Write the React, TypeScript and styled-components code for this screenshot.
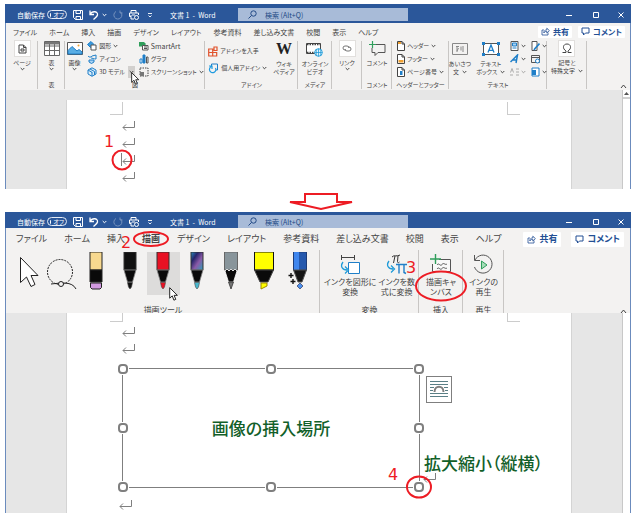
import React from "react";
import styled, { createGlobalStyle, css } from "styled-components";

const RED = "#ed1c24";
const BLUE = "#2b579a";
const GREEN = "#126029";

const GlobalStyle = createGlobalStyle`
  * { box-sizing: border-box; }
  body {
    margin: 0;
    background: #fff;
    color: #444;
    font-family: "Noto Sans CJK JP", sans-serif;
    font-feature-settings: "palt";
  }
  button, input { font: inherit; font-feature-settings: inherit; color: inherit; }
  button { border: 0; padding: 0; background: none; }
  svg { display: block; flex: none; }
`;

const Page = styled.main`
  padding: 4px 8px 16px 5px;
`;

/* ---------- window and title bar ---------- */

const AppWindow = styled.section`
  display: flex;
  flex-direction: column;
`;

const TitleBar = styled.header<{ $short?: boolean }>`
  display: grid;
  grid-template-columns: 153px 68px minmax(60px, 170px) 1fr;
  align-items: center;
  height: ${(p) => (p.$short ? 16 : 19)}px;
  padding: ${(p) => (p.$short ? 3 : 2)}px 0 0 12px;
  background: ${BLUE};
  color: #fff;
  font-size: 7px;
  line-height: 10px;
`;

const QuickAccess = styled.div`
  display: flex;
  align-items: center;
`;

const AutoSave = styled.label`
  display: flex;
  align-items: center;
  gap: 2px;
  margin-right: 6px;
  white-space: nowrap;
`;

const Pill = styled.span`
  display: flex;
  align-items: center;
  gap: 2px;
  width: 20px;
  height: 9px;
  padding: 0 2px;
  border: 1px solid #e4ebf5;
  border-radius: 5px;
  font-size: 6px;
`;

const PillInput = styled.input`
  appearance: none;
  width: 4px;
  height: 4px;
  margin: 0;
  border-radius: 50%;
  background: #fff;
`;

const BarButton = styled.button<{ $dim?: boolean; $gap?: number }>`
  display: flex;
  margin-right: ${(p) => p.$gap ?? 6}px;
  opacity: ${(p) => (p.$dim ? 0.35 : 1)};
`;

const DocTitle = styled.span`
  white-space: nowrap;
`;

const SearchBox = styled.label`
  display: flex;
  align-items: center;
  gap: 8px;
  height: 13px;
  padding-left: 10px;
  background: #a8bbd8;
  color: #234a86;
`;

const SearchInput = styled.input`
  flex: 1;
  min-width: 0;
  height: 12px;
  border: 0;
  padding: 0;
  background: none;
  outline: 0;
  &::placeholder { color: #234a86; opacity: 1; }
`;

const Controls = styled.div`
  display: flex;
  justify-content: flex-end;
  gap: 17px;
  padding-right: 7px;
`;

/* ---------- tabs ---------- */

const TabRow = styled.nav<{ $large?: boolean }>`
  display: flex;
  align-items: center;
  gap: ${(p) => (p.$large ? 17 : 12)}px;
  height: ${(p) => (p.$large ? 22 : 17)}px;
  padding: ${(p) => (p.$large ? "0 6px 0 10px" : "0 5px 0 7px")};
  border: solid #6b8bbd;
  border-width: 0 1px;
  background: #f3f2f1;
  font-size: ${(p) => (p.$large ? 9 : 7)}px;
  line-height: 12px;
`;

const Tab = styled.button<{ $active?: boolean }>`
  position: relative;
  white-space: nowrap;
  font-weight: ${(p) => (p.$active ? 700 : 400)};
`;

const TabActions = styled.div<{ $large?: boolean }>`
  display: flex;
  gap: ${(p) => (p.$large ? 10 : 6)}px;
  margin-left: auto;
  font-size: ${(p) => (p.$large ? 9 : 8)}px;
`;

const ActionButton = styled.button<{ $large?: boolean }>`
  display: flex;
  align-items: center;
  gap: 3px;
  height: ${(p) => (p.$large ? 15 : 12)}px;
  padding: 0 ${(p) => (p.$large ? 4 : 3)}px;
  border-radius: 1px;
  background: #fff;
  color: #234f94;
  font-weight: 700;
  white-space: nowrap;
`;

/* ---------- ribbon ---------- */

const ribbonBase = css`
  display: grid;
  border: solid #6b8bbd;
  border-width: 0 1px;
  background: #f3f2f1;
`;

const InsertRibbon = styled.div`
  ${ribbonBase}
  grid-template-columns: 32px 27px 140px 93px 34px 30px 30px 57px 98px 40px 1fr;
  height: 50px;
  font-size: 6px;
  line-height: 8px;
`;

const DrawRibbon = styled.div`
  ${ribbonBase}
  grid-template-columns: 314px 99px 44px 41px 1fr;
  height: 63px;
  overflow: hidden;
  font-size: 8px;
  line-height: 10px;
`;

const Group = styled.section<{ $large?: boolean }>`
  display: flex;
  flex-direction: column;
  min-width: 0;
  padding-top: ${(p) => (p.$large ? 2 : 0)}px;
  background: linear-gradient(#c8c6c4, #c8c6c4) right / 1px ${(p) => (p.$large ? "100%" : "48px")} no-repeat;
`;

const GroupBody = styled.div<{ $large?: boolean; $gap?: number }>`
  display: flex;
  justify-content: center;
  gap: ${(p) => p.$gap ?? 0}px;
  height: ${(p) => (p.$large ? 53 : 41)}px;
`;

const GroupLabel = styled.h2`
  margin: 0;
  font: inherit;
  text-align: center;
  white-space: nowrap;
`;

const BigButton = styled.button`
  position: relative;
  display: flex;
  flex-direction: column;
  align-items: center;
  justify-content: flex-start;
  white-space: nowrap;
  span { display: flex; align-items: center; gap: 3px; }
`;

const IconSlot = styled.i<{ $h: number; $boxed?: boolean }>`
  display: flex;
  align-items: center;
  justify-content: center;
  min-width: 17px;
  height: ${(p) => p.$h}px;
  margin-bottom: ${(p) => (p.$h > 20 ? 1 : 2)}px;
  background: ${(p) => (p.$boxed ? "#fff" : "none")};
  outline: ${(p) => (p.$boxed ? "1px solid #e1dfdd" : "none")};
  outline-offset: -1px;
`;

const SmallColumn = styled.div<{ $two?: boolean }>`
  display: flex;
  flex-direction: column;
  gap: ${(p) => (p.$two ? 5 : 1)}px;
  padding-top: ${(p) => (p.$two ? 5 : 0)}px;
`;

const SmallButton = styled.button<{ $dim?: boolean; $latin?: boolean }>`
  display: flex;
  align-items: center;
  gap: 2px;
  height: 12px;
  font-size: ${(p) => (p.$latin ? 7 : 6)}px;
  white-space: nowrap;
  opacity: ${(p) => (p.$dim ? 0.45 : 1)};
`;

const SplitArrow = styled.span`
  position: relative;
  display: flex;
  align-items: center;
  justify-content: center;
  width: 7px;
  height: 12px;
  margin-left: 1px;
  background: #d2d0ce;
`;

const Pointer = styled.span<{ $low?: boolean }>`
  position: absolute;
  left: 50%;
  top: 50%;
  z-index: 2;
  padding: ${(p) => (p.$low ? "13px 0 0 6px" : 0)};
`;

const Collapse = styled.button`
  justify-self: end;
  align-self: end;
  padding: 0 3px 1px 0;
`;

const WikiMark = styled.span`
  font: 700 16px "Liberation Serif", serif;
  color: #222;
`;

const Tools = styled.div`
  display: grid;
  grid-template-columns: repeat(9, 1fr);
  height: 53px;
  padding: 0 5px 0 6px;
`;

const Tool = styled.button<{ $active?: boolean }>`
  position: relative;
  display: flex;
  justify-content: center;
  align-items: flex-start;
  height: 43px;
  background: ${(p) => (p.$active ? "#dddcdb" : "none")};
`;

/* ---------- document area ---------- */

const Workspace = styled.div`
  display: grid;
  grid-template-columns: 61px 1fr 51px 8px;
  border: solid #6b8bbd;
  border-width: 0 1px;
  background: #e6e6e6;
`;

const Sheet = styled.div<{ $top?: boolean }>`
  grid-column: 2;
  margin-top: ${(p) => (p.$top ? 10 : 0)}px;
  padding: ${(p) => (p.$top ? "2px 51px 0 43px" : "0 51px 0 43px")};
  background: #fff;
  box-shadow: -1px 0 #d4d4d4, 1px 0 #d4d4d4;
`;

const CropMarks = styled.div<{ $short?: boolean }>`
  display: flex;
  justify-content: space-between;
  height: ${(p) => (p.$short ? 9 : 13)}px;
`;

const Crop = styled.span<{ $side: "left" | "right" }>`
  width: 13px;
  border-bottom: 1px solid #ccc;
  border-${(p) => (p.$side === "left" ? "right" : "left")}: 1px solid #ccc;
`;

const Lines = styled.div<{ $first?: boolean }>`
  display: grid;
  grid-auto-rows: 17px;
  padding: ${(p) => (p.$first ? "2px 0 4px 12px" : "1px 0 11px 12px")};
`;

const Line = styled.div`
  position: relative;
  display: flex;
  align-items: center;
`;

const Scrollbar = styled.div`
  grid-column: 4;
  background: #fff;
  border-left: 1px solid #c8c8c8;
`;

const ScrollUp = styled.button`
  display: flex;
  align-items: center;
  justify-content: center;
  width: 100%;
  height: 9px;
  border-bottom: 2px solid #d0d0d0;
`;

const Between = styled.div`
  display: flex;
  justify-content: center;
  padding: 4px 0 2px 5px;
`;

const DrawingCanvas = styled.div`
  position: relative;
  display: flex;
  align-items: center;
  justify-content: center;
  height: 120px;
  margin: 0 100px 0 12px;
  border: 1px solid #7f7f7f;
`;

const Caption = styled.p`
  margin: 0;
  color: ${GREEN};
  font-size: 17px;
  line-height: 20px;
  font-weight: 500;
  white-space: nowrap;
`;

const ScaleCaption = styled(Caption)`
  position: absolute;
  left: calc(100% + 5px);
  bottom: 14px;
`;

const Handle = styled.span<{ $x: number; $y: number }>`
  position: absolute;
  left: ${(p) => p.$x}%;
  top: ${(p) => p.$y}%;
  width: 10px;
  height: 10px;
  margin: -5px;
  border: 2px solid #7f7f7f;
  border-radius: 4px;
  background: #fff;
  box-shadow: 0 0 0 1px #fff;
`;

const LayoutOptions = styled.button`
  position: absolute;
  left: calc(100% + 7px);
  top: 7px;
  display: flex;
  align-items: center;
  justify-content: center;
  width: 26px;
  height: 27px;
  border: 1px solid #7f7f7f;
  background: #fff;
`;

const AnchorMark = styled.span`
  position: absolute;
  left: calc(100% + 4px);
  bottom: 4px;
`;

const LastLine = styled.div`
  padding: 12px 0 3px 9px;
`;

/* ---------- instruction marks ---------- */

const Ring = styled.span<{ $w: number; $h: number }>`
  position: absolute;
  left: 50%;
  top: 50%;
  z-index: 3;
  width: ${(p) => p.$w}px;
  height: ${(p) => p.$h}px;
  transform: translate(-50%, -50%);
  border: 2px solid ${RED};
  border-radius: 50%;
  pointer-events: none;
`;

const Step = styled.span<{ $x: number; $y: number }>`
  position: absolute;
  left: ${(p) => p.$x}px;
  top: ${(p) => p.$y}px;
  z-index: 4;
  color: ${RED};
  font: 16px/16px "DejaVu Sans", sans-serif;
`;

const Caret = styled.span`
  position: absolute;
  left: -1px;
  top: 2px;
  width: 1px;
  height: 13px;
  background: #7f7f7f;
`;

const CornerRing = styled.span`
  position: absolute;
  left: 100%;
  top: 100%;
`;

const LabelRing = styled.div`
  position: absolute;
  left: 50%;
  top: 34px;
`;

/* ---------- icons ---------- */

type IconProps = { w?: number; h?: number; children: React.ReactNode };
const Icon = ({ w = 10, h = 10, children }: IconProps) => (
  <svg width={w} height={h} viewBox={`0 0 ${w} ${h}`} fill="none" stroke="currentColor" strokeWidth="1" aria-hidden="true">
    {children}
  </svg>
);

const Chevron = () => <Icon w={5} h={4}><path d="M.7 1 2.5 2.8 4.3 1" /></Icon>;

const ReturnMark = () => (
  <Icon w={13} h={10}><path d="M12.500 0v6.500H1M4 3.500 1 6.500l3 3" stroke="#7f7f7f" /></Icon>
);

const Cursor = ({ size = 12 }: { size?: number }) => (
  <svg width={size * 0.7} height={size} viewBox="0 0 14 20" fill="#fff" stroke="#222" strokeWidth="1.4" aria-hidden="true">
    <path d="M1 1v15l3.6-3.3L7 18.8l2.7-1.1-2.4-5.8H12z" />
  </svg>
);

const ShareIcon = () => (
  <Icon w={9} h={9}><path d="M3 3H1v5h6V5.500M2.800 6c0-2.200 1-3 3-3V1.200L8.400 3.600 5.800 6V4.400C4.400 4.300 3.500 4.800 2.800 6z" strokeWidth=".8" /></Icon>
);
const CommentIcon = () => <Icon w={9} h={9}><path d="M1 1h7v5H4.500L2.500 8V6H1z" /></Icon>;

const DocIcon = () => (
  <Icon w={9} h={10}><path d="M1 1h4.500L8 3.500V9H1zM5.500 1v2.500H8M3 5h3v2H3z" /></Icon>
);
const TableIcon = () => (
  <Icon w={16} h={15}><path d="M.5.5h15v14H.5zM.5 5h15M.5 9.500h15M5.500 3v11.500M10.500 3v11.500" stroke="#666" fill="#fff" /><path d="M1 1h14v2.500H1z" fill="#777" stroke="none" /></Icon>
);
const PictureIcon = () => (
  <Icon w={16} h={13}>
    <path d="M.5.5h15v12H.5z" fill="#fff" stroke="#555" />
    <path d="M1 12V8.500L5 4.500l5 4.500 2-1.500 3 2.500v2z" fill="#5aaee4" stroke="#1f7fc8" />
    <circle cx="11.500" cy="3.500" r="1" fill="#f0a030" stroke="none" />
  </Icon>
);
const ShapesIcon = () => (
  <Icon><path d="M.5 3.500 4 .5l3 3-3.500 3z" fill="#3b9be0" stroke="#1f7fc8" /><path d="M4 4h5v5H4z" fill="#fff" stroke="#555" /></Icon>
);
const BirdIcon = () => (
  <Icon><path d="M1 2c1 1.500 3 1.500 4 0l4-1v4c-2 0-4-1-5-1" stroke="#1f7fc8" /><path d="M2 6h5v2L4.500 9.500 2 8z" stroke="#1f7fc8" fill="#a9d2f2" /></Icon>
);
const CubeIcon = () => (
  <Icon><path d="M5 .8 9 3v4L5 9.300 1 7V3zM3 2l4.500 2.500V8M5 5v4M1.200 3.200 5 5.300" stroke="#1f7fc8" fill="#d8ecfa" /></Icon>
);
const SmartArtIcon = () => (
  <Icon><path d="M0 1h5l2 2-2 2.500H0z" fill="#2f9e5b" stroke="none" /><path d="M3.500 4.500h5.500V9H3.500zM5 6h3M5 7.500h3" stroke="#555" fill="#fff" /></Icon>
);
const ChartIcon = () => (
  <Icon><path d="M1 5h2v4H1z" fill="#fff" stroke="#1f7fc8" /><path d="M4 1h2v8H4z" fill="#1f7fc8" stroke="#1f7fc8" /><path d="M7.500 3h1.500v6H7.500z" stroke="#555" /></Icon>
);
const ScreenIcon = () => (
  <Icon><path d="M1 1h8v8H1z" strokeDasharray="1.500 1" /><path d="M1 5h4v4H1z" fill="#777" stroke="none" /></Icon>
);
const StoreIcon = () => (
  <Icon w={10} h={11}><path d="M.7 3h4v3.500H.7zM.7 6.500h8v3.500H.7zM4.700 6.500V10M6 1h3v3.500H6z" stroke="#e0522c" strokeWidth="1.200" /></Icon>
);
const MyAddinIcon = () => (
  <Icon w={11} h={11}><path d="M3.500 3V1h6v6H8" stroke="#1f7fc8" /><path d="M3.500 3.500a3.200 3.200 0 1 0 4 1.500M1 3h3v3" stroke="#1f9be0" strokeWidth="1.200" /></Icon>
);
const VideoIcon = () => (
  <Icon w={17} h={15}>
    <path d="M.5 1.500h14v10H.5z" stroke="#444" fill="#fff" />
    <path d="M1 2.500h14M1 10.500h9" stroke="#444" strokeWidth="1.500" strokeDasharray="1.500 1" />
    <circle cx="12.500" cy="10.500" r="3.800" fill="#fff" stroke="#1f9bd8" />
    <path d="M8.700 10.500h7.600M12.500 6.700v7.600M10.700 7.500v6M14.300 7.500v6" stroke="#1f9bd8" strokeWidth=".8" />
  </Icon>
);
const LinkIcon = () => (
  <Icon w={10} h={7}><path d="M4 5H3a2 2 0 0 1 0-4h2a2 2 0 0 1 2 2M6 2h1a2 2 0 0 1 0 4H5a2 2 0 0 1-2-2" stroke="#777" /></Icon>
);
const NewCommentIcon = () => (
  <Icon w={17} h={16}><path d="M4 3.500h12v8H9L6 14.500v-3H3V7" stroke="#555" /><path d="M3.500 0v7M0 3.500h7" stroke="#2f9e5b" strokeWidth="1.200" /></Icon>
);
const PageIcon = ({ at, tint }: { at: "top" | "bottom" | "number"; tint: string }) => (
  <Icon w={8} h={10}>
    <path d="M.5.5H5L7.500 3v6.500h-7zM5 .500V3h2.500" fill="#fff" stroke="#444" />
    {at === "top" && <path d="M1 1h3v2H1z" fill={tint} stroke="none" />}
    {at === "bottom" && <path d="M1.500 6h5v2.500h-5z" fill={tint} stroke="none" />}
    {at === "number" && <path d="M3 4h2.500v4H3z" fill={tint} stroke="none" />}
  </Icon>
);
const GreetingIcon = () => (
  <Icon w={16} h={12}><path d="M.5.5h15v11H.5z" stroke="#888" /><path d="M5 3v6M4 3.500h3M6.500 5 5 8M9 3.500v4M11 3v6" stroke="#888" /></Icon>
);
const TextBoxIcon = () => (
  <Icon w={18} h={14}>
    <path d="M1.500 1.500h15v11h-15z" stroke="#555" fill="#fff" />
    <path d="M6 10.500 9 3l3 7.500M7 8.300h4" stroke="#1f7fc8" strokeWidth="1.300" />
    <path d="M0 0h3v3H0zM15 0h3v3h-3zM0 11h3v3H0zM15 11h3v3h-3z" fill="#1f7fc8" stroke="none" />
  </Icon>
);
const PartsIcon = () => <Icon w={9}><path d="M1 .5h7v9H1z" stroke="#555" fill="#fff" /><path d="M2.500 2h4v3h-4zM2.500 7h4" stroke="#1f7fc8" fill="#a9d2f2" /></Icon>;
const SignIcon = () => <Icon w={9}><path d="M1 .5h5v9H1z" stroke="#555" fill="#fff" /><path d="M8.500 2.500 4 7.500 3 9" stroke="#1f7fc8" strokeWidth="1.600" /></Icon>;
const WordArtIcon = () => <Icon w={9}><path d="M.5 8 7.500 1 6 9M2.500 6h4" stroke="#1f7fc8" strokeWidth="1.500" /></Icon>;
const DateIcon = () => <Icon w={9}><path d="M.5 1.500h8v7h-8zM.500 3.500h8" stroke="#555" /><circle cx="6.500" cy="7" r="2" fill="#fff" stroke="#1f7fc8" /></Icon>;
const DropCapIcon = () => <Icon w={9}><path d="M0 8h3M6 2h3M6 5h3M6 8h3M.500 5.500 2 1.500l1.500 4" stroke="#555" /></Icon>;
const ObjectIcon = () => <Icon w={9}><path d="M1 1h7v8H1z" stroke="#1f7fc8" fill="#fff" /><path d="M1 3h4v5H1z" fill="#1f7fc8" stroke="none" /></Icon>;
const OmegaIcon = () => (
  <Icon w={12} h={11}><path d="M1.500 9.500H5V8C1 5.500 2 1 6 1s5 4.500 1 7v1.500h3.500" stroke="#444" /></Icon>
);

const PEN_BODY: Record<string, string> = { black: "#111", red: "#e81123", galaxy: "url(#galaxy)" };
const PEN_TIP: Record<string, string> = { black: "#111", red: "#e81123", galaxy: "#48b8cf" };

const Pen = ({ kind }: { kind: "black" | "red" | "galaxy" }) => (
  <Icon w={14} h={38}>
    <defs>
      <linearGradient id="galaxy" x1="0" y1="0" x2="1" y2="1">
        <stop offset="0" stopColor="#2a8fc0" /><stop offset=".3" stopColor="#26256b" />
        <stop offset=".6" stopColor="#8b5aa8" /><stop offset="1" stopColor="#2da0b8" />
      </linearGradient>
    </defs>
    <path d="M1 0h12v18H1z" fill={PEN_BODY[kind]} stroke="#333" />
    <path d="M1 18h12L9.500 30h-5z" fill="#0a0a0a" stroke="#888" strokeWidth=".8" />
    <path d="M4.500 30.500h5L8.500 35 7 37 5.500 35z" fill={PEN_TIP[kind]} stroke="#444" strokeWidth=".6" />
  </Icon>
);

const EraserPen = () => (
  <Icon w={14} h={38}>
    <path d="M1 0h12v18H1z" fill="#f8d98f" stroke="#222" />
    <path d="M1 18h12v12H1z" fill="#0a0a0a" stroke="#222" />
    <path d="M1.500 31h11v4.500l-1.500 1.500H3l-1.500-1.500z" fill="#d29ae0" stroke="#222" />
  </Icon>
);

const Pencil = () => (
  <Icon w={14} h={38}>
    <path d="M.5 0h13v18H.500z" fill="#88959b" stroke="#666" />
    <path d="M1 19l2-2 2 2 2-2 2 2 2-2 2 2-3.500 11h-5z" fill="#0a0a0a" stroke="#fff" strokeWidth=".8" />
    <path d="M4.500 30h5L7 37z" fill="#777" stroke="#333" strokeWidth=".8" />
  </Icon>
);

const Highlighter = () => (
  <Icon w={22} h={38}>
    <path d="M1.500 0h19v18h-19z" fill="#ffff00" stroke="#111" />
    <path d="M1.500 18h19L15 30H7z" fill="#0a0a0a" />
    <path d="M8 31h6v3l-6 3z" fill="#ffff00" stroke="#a08a00" />
  </Icon>
);

const ActionPen = () => (
  <Icon w={20} h={38}>
    <path d="M5.500 0h13v18h-13z" fill="#2458ad" stroke="#1d3c78" />
    <path d="M6 0h5v18H6z" fill="#3f86ee" stroke="none" />
    <path d="M5.500 18h13l-4.500 12h-4z" fill="#151515" stroke="#555" />
    <path d="m12 31 3 3-3 3-3-3z" fill="#4a90ee" stroke="#224" strokeWidth=".6" />
    <path d="M3 21v5M.500 23.500h5M5 27v5M2.500 29.500h5" stroke="#111" strokeWidth="1.400" />
  </Icon>
);

const SelectArrow = () => (
  <Icon w={20} h={38}><path d="M1.500 5.500v25l6-5.500 4.500 9.500 4-2-4-9h7z" fill="#fff" stroke="#222" /></Icon>
);

const LassoIcon = () => (
  <Icon w={32} h={38}>
    <circle cx="14" cy="20" r="12.500" stroke="#222" strokeDasharray="2 1" />
    <path d="M5 32c10-1 21-3 25 5" stroke="#222" />
    <circle cx="15" cy="32" r="2.500" stroke="#222" fill="#f3f2f1" />
  </Icon>
);

const InkToShapeIcon = () => (
  <Icon w={21} h={21}>
    <path d="M1 3.500h14M1.500 1v5M14.500 1v5" stroke="#444" />
    <path d="M8.500 8.500h11v11h-11z" fill="#fff" stroke="#1f7fc8" />
    <path d="M3 8c-3 4-1 8 4 8M5 12.500 8.500 16 5 19.500" stroke="#1f9bd8" strokeWidth="1.300" />
  </Icon>
);
const InkToMathIcon = () => (
  <Icon w={22} h={21}>
    <path d="M6 3c2-2.500 5 0 8-2M9 2 7.500 9M12 2l-.5 5.500c0 1.500 1 1.500 2 .5" stroke="#333" />
    <path d="M3 7c-3 4-1 8 4 8M5 11.500 8.500 15 5 18.500" stroke="#1f9bd8" strokeWidth="1.300" />
    <path d="M10 10.500h11M13 10.500v9M18 10.500v8l2 1" stroke="#1f7fc8" strokeWidth="1.400" />
  </Icon>
);
const CanvasIcon = () => (
  <Icon w={22} h={20}>
    <path d="M9 5.500h11.500v12h-18V10" stroke="#555" fill="#f9f9f9" />
    <path d="M5.500 0v10M0 5h11" stroke="#2f9e5b" strokeWidth="1.400" />
    <path d="M7 11c2-3 3 2 5-.500s3 1 5-.500M7 15c2-3 3 2 5-.500s3 1 5-.500" stroke="#555" />
  </Icon>
);
const ReplayIcon = () => (
  <Icon w={21} h={21}>
    <path d="M2 6a9 9 0 1 1-.5 7M1.500 1v5.500H7" stroke="#555" />
    <path d="M8.500 7v8l5.500-4z" stroke="#2f9e5b" fill="#a6dcb8" />
  </Icon>
);
const WrapIcon = () => (
  <Icon w={18} h={19}>
    <path d="M0 1.500h18M0 4.500h18M0 7.500h4M14 7.500h4M0 10.500h3M15 10.500h3M0 13.500h18M0 16.500h18" stroke="#5a7f86" />
    <path d="M4.500 12c0-7 9-7 9 0" stroke="#7f7f7f" strokeWidth="2" />
  </Icon>
);

/* ---------- composed parts ---------- */

const TitleContents = ({ short }: { short?: boolean }) => (
  <TitleBar $short={short}>
    <QuickAccess>
      <AutoSave>
        自動保存
        <Pill><PillInput type="checkbox" role="switch" />オフ</Pill>
      </AutoSave>
      <BarButton aria-label="上書き保存"><Icon><path d="M.5.500h9v9h-7l-2-2zM3 .500V3.500h4.500V.500M3 9.500v-3h4.500v3" /></Icon></BarButton>
      <BarButton aria-label="元に戻す" $gap={3}><Icon><path d="M1 .500V4.500h4M1 4.500C3 .500 9 1 8.500 5 8 7 6 8 4.500 9.500" strokeWidth="1.300" /></Icon></BarButton>
      <BarButton aria-label="元に戻す一覧"><Chevron /></BarButton>
      <BarButton aria-label="やり直し" $dim><Icon><path d="M7 .500V3h2.500M7.500 2A4 4 0 1 1 3 1.500" /></Icon></BarButton>
      <BarButton aria-label="印刷" $gap={8}><Icon><path d="M2 3V.500h5V3M2 6.500H.500V3h9v2M3 5h3M2 5v4h3" /><circle cx="7.500" cy="7.500" r="2" /></Icon></BarButton>
      <BarButton aria-label="クイック アクセスのカスタマイズ" $gap={0}><Icon w={6} h={6}><path d="M1 1.500h4M1.500 3.500 3 5l1.500-1.500" strokeWidth=".9" /></Icon></BarButton>
    </QuickAccess>
    <DocTitle>文書 1&nbsp; -&nbsp; Word</DocTitle>
    <SearchBox>
      <Icon w={9} h={9}><circle cx="5.500" cy="3.500" r="2.700" /><path d="M3.500 5.500.500 8.500" /></Icon>
      <SearchInput aria-label="検索" placeholder="検索 (Alt+Q)" />
    </SearchBox>
    <Controls>
      <BarButton aria-label="最小化" $gap={4}><Icon w={6} h={6}><path d="M0 3.500h6" /></Icon></BarButton>
      <BarButton aria-label="最大化" $gap={2}><Icon w={6} h={6}><path d="M.5.500h5v5h-5z" /></Icon></BarButton>
      <BarButton aria-label="閉じる" $gap={0}><Icon w={6} h={6}><path d="m.5.500 5 5m0-5-5 5" /></Icon></BarButton>
    </Controls>
  </TitleBar>
);

const TABS = ["ファイル", "ホーム", "挿入", "描画", "デザイン", "レイアウト", "参考資料", "差し込み文書", "校閲", "表示", "ヘルプ"];

const Tabs = ({ large }: { large?: boolean }) => (
  <TabRow $large={large}>
    {TABS.map((name) => (
      <Tab key={name} $active={large && name === "描画"}>
        {name}
        {large && name === "描画" && (
          <>
            <Ring $w={36} $h={16} />
            <Step $x={-21} $y={2}>2</Step>
          </>
        )}
      </Tab>
    ))}
    <TabActions $large={large}>
      <ActionButton $large={large}><ShareIcon />共有</ActionButton>
      <ActionButton $large={large}><CommentIcon />コメント</ActionButton>
    </TabActions>
  </TabRow>
);

type SmallProps = { icon: React.ReactNode; text?: string; menu?: boolean; dim?: boolean; latin?: boolean };
const Small = ({ icon, text, menu, dim, latin }: SmallProps) => (
  <SmallButton $dim={dim} $latin={latin}>{icon}{text}{menu && <Chevron />}</SmallButton>
);

const InsertTools = () => (
  <InsertRibbon>
    <Group>
      <GroupBody><BigButton><IconSlot $h={17} $boxed><DocIcon /></IconSlot>ページ<Chevron /></BigButton></GroupBody>
    </Group>
    <Group>
      <GroupBody><BigButton><IconSlot $h={17}><TableIcon /></IconSlot>表<Chevron /></BigButton></GroupBody>
      <GroupLabel>表</GroupLabel>
    </Group>
    <Group>
      <GroupBody $gap={4}>
        <BigButton><IconSlot $h={17}><PictureIcon /></IconSlot>画像<Chevron /></BigButton>
        <SmallColumn>
          <Small icon={<ShapesIcon />} text="図形" menu />
          <Small icon={<BirdIcon />} text="アイコン" />
          <SmallButton><CubeIcon />3D モデル<SplitArrow><Chevron /><Pointer><Cursor size={13} /></Pointer></SplitArrow></SmallButton>
        </SmallColumn>
        <SmallColumn>
          <Small icon={<SmartArtIcon />} text="SmartArt" latin />
          <Small icon={<ChartIcon />} text="グラフ" />
          <Small icon={<ScreenIcon />} text="スクリーンショット" menu />
        </SmallColumn>
      </GroupBody>
      <GroupLabel>図</GroupLabel>
    </Group>
    <Group>
      <GroupBody $gap={6}>
        <SmallColumn $two>
          <Small icon={<StoreIcon />} text="アドインを入手" />
          <Small icon={<MyAddinIcon />} text="個人用アドイン" menu />
        </SmallColumn>
        <BigButton><IconSlot $h={18}><WikiMark>W</WikiMark></IconSlot>ウィキ<span>ペディア</span></BigButton>
      </GroupBody>
      <GroupLabel>アドイン</GroupLabel>
    </Group>
    <Group>
      <GroupBody><BigButton><IconSlot $h={18}><VideoIcon /></IconSlot>オンライン<span>ビデオ</span></BigButton></GroupBody>
      <GroupLabel>メディア</GroupLabel>
    </Group>
    <Group>
      <GroupBody><BigButton><IconSlot $h={17} $boxed><LinkIcon /></IconSlot>リンク<Chevron /></BigButton></GroupBody>
    </Group>
    <Group>
      <GroupBody><BigButton><IconSlot $h={17}><NewCommentIcon /></IconSlot>コメント</BigButton></GroupBody>
      <GroupLabel>コメント</GroupLabel>
    </Group>
    <Group>
      <GroupBody>
        <SmallColumn>
          <Small icon={<PageIcon at="top" tint="#f0a030" />} text="ヘッダー" menu />
          <Small icon={<PageIcon at="bottom" tint="#f0a030" />} text="フッター" menu />
          <Small icon={<PageIcon at="number" tint="#1f7fc8" />} text="ページ番号" menu />
        </SmallColumn>
      </GroupBody>
      <GroupLabel>ヘッダーとフッター</GroupLabel>
    </Group>
    <Group>
      <GroupBody $gap={5}>
        <BigButton><IconSlot $h={18}><GreetingIcon /></IconSlot>あいさつ<span>文<Chevron /></span></BigButton>
        <BigButton><IconSlot $h={18}><TextBoxIcon /></IconSlot>テキスト<span>ボックス<Chevron /></span></BigButton>
        <SmallColumn>
          <Small icon={<PartsIcon />} menu />
          <Small icon={<WordArtIcon />} menu />
          <Small icon={<DropCapIcon />} menu dim />
        </SmallColumn>
        <SmallColumn>
          <Small icon={<SignIcon />} menu />
          <Small icon={<DateIcon />} />
          <Small icon={<ObjectIcon />} menu />
        </SmallColumn>
      </GroupBody>
      <GroupLabel>テキスト</GroupLabel>
    </Group>
    <Group>
      <GroupBody><BigButton><IconSlot $h={17} $boxed><OmegaIcon /></IconSlot>記号と<span>特殊文字<Chevron /></span></BigButton></GroupBody>
    </Group>
    <Collapse aria-label="リボンを折りたたむ"><Icon w={7} h={5}><path d="m1 4 2.500-3L6 4" /></Icon></Collapse>
  </InsertRibbon>
);

const DrawTools = () => (
  <DrawRibbon>
    <Group $large>
      <Tools>
        <Tool aria-label="選択"><SelectArrow /></Tool>
        <Tool aria-label="なげなわ選択"><LassoIcon /></Tool>
        <Tool aria-label="消しゴム"><EraserPen /></Tool>
        <Tool aria-label="ペン 黒"><Pen kind="black" /></Tool>
        <Tool aria-label="ペン 赤" $active><Pen kind="red" /><Pointer $low><Cursor size={14} /></Pointer></Tool>
        <Tool aria-label="ペン 銀河"><Pen kind="galaxy" /></Tool>
        <Tool aria-label="鉛筆"><Pencil /></Tool>
        <Tool aria-label="蛍光ペン"><Highlighter /></Tool>
        <Tool aria-label="アクション ペン"><ActionPen /></Tool>
      </Tools>
      <GroupLabel>描画ツール</GroupLabel>
    </Group>
    <Group $large>
      <GroupBody $large $gap={2}>
        <BigButton><IconSlot $h={24}><InkToShapeIcon /></IconSlot>インクを図形に<span>変換</span></BigButton>
        <BigButton><IconSlot $h={24}><InkToMathIcon /></IconSlot>インクを数<span>式に変換</span></BigButton>
      </GroupBody>
      <GroupLabel>変換</GroupLabel>
    </Group>
    <Group $large>
      <GroupBody $large>
        <BigButton>
          <IconSlot $h={24}><CanvasIcon /></IconSlot>描画キャ<span>ンバス</span>
          <LabelRing><Ring $w={52} $h={31} /><Step $x={-35} $y={-26}>3</Step></LabelRing>
        </BigButton>
      </GroupBody>
      <GroupLabel>挿入</GroupLabel>
    </Group>
    <Group $large>
      <GroupBody $large>
        <BigButton><IconSlot $h={24}><ReplayIcon /></IconSlot>インクの<span>再生</span></BigButton>
      </GroupBody>
      <GroupLabel>再生</GroupLabel>
    </Group>
    <Collapse aria-label="リボンを折りたたむ"><Icon w={7} h={5}><path d="m1 4 2.500-3L6 4" /></Icon></Collapse>
  </DrawRibbon>
);

const HANDLES = [[0, 0], [50, 0], [100, 0], [0, 50], [100, 50], [0, 100], [50, 100], [100, 100]];

export default function App() {
  return (
    <>
      <GlobalStyle />
      <Page>
        <AppWindow>
          <TitleContents />
          <Tabs />
          <InsertTools />
          <Workspace>
            <Sheet $top>
              <CropMarks><Crop $side="left" /><Crop $side="right" /></CropMarks>
              <Lines $first>
                <Line><ReturnMark /></Line>
                <Line><ReturnMark /><Step $x={-18} $y={0}>1</Step></Line>
                <Line>
                  <ReturnMark />
                  <Caret><Ring $w={21} $h={21} /></Caret>
                </Line>
                <Line><ReturnMark /></Line>
              </Lines>
            </Sheet>
            <Scrollbar><ScrollUp aria-label="上へスクロール"><Icon w={5} h={3}><path d="M0 3 2.500 0 5 3z" fill="#555" stroke="none" /></Icon></ScrollUp></Scrollbar>
          </Workspace>
        </AppWindow>

        <Between>
          <Icon w={66} h={17}><path d="M17 1h32v8h15L33 16 2 9h15z" stroke={RED} strokeWidth="2" /></Icon>
        </Between>

        <AppWindow>
          <TitleContents short />
          <Tabs large />
          <DrawTools />
          <Workspace>
            <Sheet>
              <CropMarks $short><Crop $side="left" /><Crop $side="right" /></CropMarks>
              <Lines>
                <Line><ReturnMark /></Line>
                <Line><ReturnMark /></Line>
              </Lines>
              <DrawingCanvas>
                <Caption>画像の挿入場所</Caption>
                {HANDLES.map(([x, y]) => <Handle key={`${x}-${y}`} $x={x} $y={y} />)}
                <LayoutOptions aria-label="レイアウト オプション"><WrapIcon /></LayoutOptions>
                <AnchorMark><ReturnMark /></AnchorMark>
                <ScaleCaption>拡大縮小（縦横）</ScaleCaption>
                <CornerRing><Ring $w={26} $h={23} /><Step $x={-31} $y={-20}>4</Step></CornerRing>
              </DrawingCanvas>
              <LastLine><ReturnMark /></LastLine>
            </Sheet>
            <Scrollbar />
          </Workspace>
        </AppWindow>
      </Page>
    </>
  );
}
